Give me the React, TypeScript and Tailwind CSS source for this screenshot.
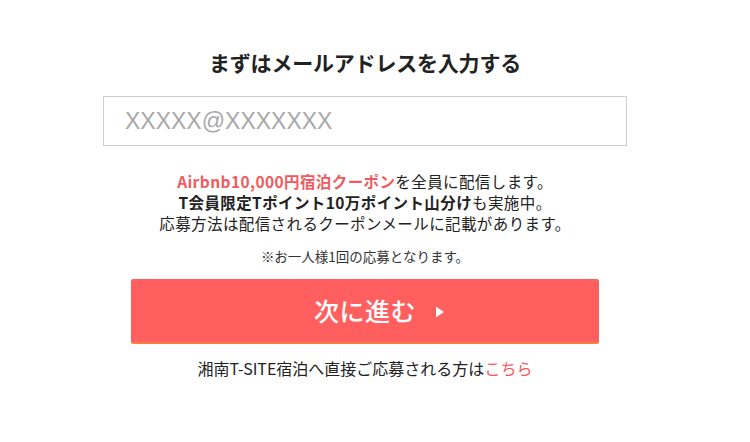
export default function App() {
  const font = { fontFamily: '"Noto Sans CJK JP", "Noto Sans", sans-serif' }
  return (
    <div className="w-[750px] h-[442px] bg-white overflow-hidden" style={font}>
      <div className="w-[730px] flex flex-col items-center pt-[48px] text-[#222]">
        <h1 className="text-[21px] leading-[28px] font-bold tracking-[-0.2px]">
          まずはメールアドレスを入力する
        </h1>

        <div className="mt-[20px] w-[524px] h-[50px] border border-[#cfcfcf] flex items-center pl-[21px]">
          <input
            className="w-full outline-none text-[23px] placeholder:text-[#a8a8a8] bg-transparent"
            style={{ fontFamily: '"Liberation Sans", Arial, sans-serif' }}
            placeholder="XXXXX@XXXXXXX"
          />
        </div>

        <div className="mt-[25px] flex flex-col items-center text-[15.5px] leading-[21px] tracking-[0.4px] text-[#222]">
          <p className="flex">
            <span className="font-bold text-[#f25a5f]">Airbnb10,000円宿泊クーポン</span>
            <span>を全員に配信します。</span>
          </p>
          <p className="flex">
            <span className="font-bold">T会員限定Tポイント10万ポイント山分け</span>
            <span>も実施中。</span>
          </p>
          <p>応募方法は配信されるクーポンメールに記載があります。</p>
        </div>

        <p className="mt-[12px] text-[13.5px] leading-[20px] text-[#333]">※お一人様1回の応募となります。</p>

        <button className="mt-[13px] w-[468px] h-[65px] bg-[#ff5f5f] rounded-[2px] border-b-2 border-[#f5823f] flex items-center justify-center text-white">
          <span className="relative text-[25px] font-medium leading-none tracking-[0.5px]">
            次に進む
            <svg width="8" height="11" viewBox="0 0 8 11" className="absolute left-full top-1/2 -translate-y-1/2 ml-[20px] mt-[1px]">
              <path d="M0 0 L8 5.5 L0 11 Z" fill="white" />
            </svg>
          </span>
        </button>

        <p className="mt-[14px] flex text-[16px] leading-[20px] text-[#222]">
          <span>湘南T-SITE宿泊へ直接ご応募される方は</span>
          <span className="text-[#f25a5f]">こちら</span>
        </p>
      </div>
    </div>
  )
}
